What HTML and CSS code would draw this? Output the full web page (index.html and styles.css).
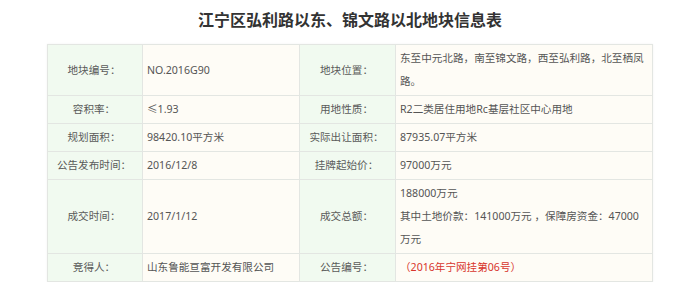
FILE: index.html
```html
<!DOCTYPE html>
<html lang="zh-CN">
<head>
<meta charset="utf-8">
<title>地块信息表</title>
<link rel="stylesheet" href="styles.css">
</head>
<body>
<div class="page">
  <h1 class="title">江宁区弘利路以东、锦文路以北地块信息表</h1>
  <table class="info">
    <colgroup>
      <col class="c1"><col class="c2"><col class="c3"><col class="c4">
    </colgroup>
    <tr class="r2">
      <td class="lbl">地块编号：</td>
      <td class="val">NO.2016G90</td>
      <td class="lbl">地块位置：</td>
      <td class="val">东至中元北路，南至锦文路，西至弘利路，北至栖凤路。</td>
    </tr>
    <tr>
      <td class="lbl">容积率：</td>
      <td class="val">≤1.93</td>
      <td class="lbl">用地性质：</td>
      <td class="val">R2二类居住用地Rc基层社区中心用地</td>
    </tr>
    <tr>
      <td class="lbl">规划面积：</td>
      <td class="val">98420.10平方米</td>
      <td class="lbl">实际出让面积：</td>
      <td class="val">87935.07平方米</td>
    </tr>
    <tr>
      <td class="lbl">公告发布时间：</td>
      <td class="val">2016/12/8</td>
      <td class="lbl">挂牌起始价：</td>
      <td class="val">97000万元</td>
    </tr>
    <tr>
      <td class="lbl">成交时间：</td>
      <td class="val">2017/1/12</td>
      <td class="lbl">成交总额：</td>
      <td class="val"><p class="para">188000万元</p><p class="para">其中土地价款：141000万元 ，保障房资金：47000万元</p></td>
    </tr>
    <tr>
      <td class="lbl">竞得人：</td>
      <td class="val">山东鲁能亘富开发有限公司</td>
      <td class="lbl">公告编号：</td>
      <td class="val red">（2016年宁网挂第06号）</td>
    </tr>
  </table>
</div>
</body>
</html>
```

FILE: styles.css
```css
html, body {
  margin: 0;
  padding: 0;
  background: #ffffff;
}

.page {
  width: 700px;
  padding-top: 8px;
  font-family: "Noto Sans", "Noto Sans CJK SC", sans-serif;
}

.title {
  margin: 0 0 12px 0;
  text-align: center;
  font-size: 16px;
  line-height: 24px;
  font-weight: bold;
  color: #333333;
}

.info {
  width: 605px;
  margin: 0 auto;
  border-collapse: collapse;
  table-layout: fixed;
  font-size: 10.6px;
  line-height: 23px;
  color: #555555;
  box-shadow: 0 0 2px rgba(0, 0, 0, 0.06);
}

.c1 { width: 95px; }
.c2 { width: 157px; }
.c3 { width: 96px; }
.c4 { width: 257px; }

.info td {
  border: 1px solid #e3e6e2;
  padding: 2px 6px 2px 4px;
  vertical-align: middle;
}

.lbl {
  text-align: center;
  background: #f1faf0;
  color: #5a5a5a;
}

.val {
  text-align: left;
  background: #fefcf6;
}

.para {
  margin: 0;
}

.red {
  color: #d8352c;
}
```
